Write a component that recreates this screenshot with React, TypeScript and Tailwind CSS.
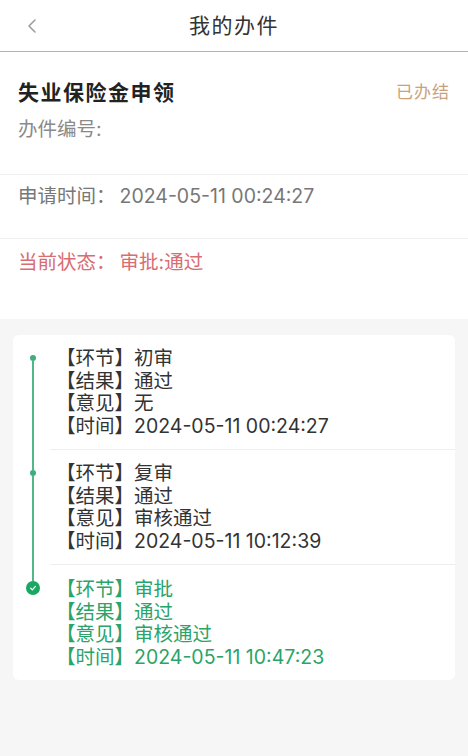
import { ChevronLeft } from 'lucide-react';

type Step = {
  node: string;
  result: string;
  opinion: string;
  time: string;
};

const steps: Step[] = [
  { node: '初审', result: '通过', opinion: '无', time: '2024-05-11 00:24:27' },
  { node: '复审', result: '通过', opinion: '审核通过', time: '2024-05-11 10:12:39' },
  { node: '审批', result: '通过', opinion: '审核通过', time: '2024-05-11 10:47:23' },
];

const font = { fontFamily: 'Inter, "Noto Sans CJK SC", "Noto Sans", sans-serif' };

const TimelineItem = ({ step, index, total }: { step: Step; index: number; total: number }) => {
  const isFirst = index === 0;
  const isLast = index === total - 1;

  return (
    <div className="flex">
      {/* rail: line - dot - line */}
      <div className="w-[37px] shrink-0 pl-[3px] flex flex-col items-center">
        <div className={`w-[2px] ${isLast ? 'h-[16px]' : 'h-[20px]'} ${isFirst ? '' : 'bg-[#52b788]'}`} />
        {isLast ? (
          <div className="w-[14px] h-[14px] rounded-full bg-[#17a862] flex items-center justify-center shrink-0">
            <svg width="8" height="8" viewBox="0 0 10 10" fill="none">
              <path d="M2 5.2 L4.2 7.3 L8 3" stroke="white" strokeWidth="1.6" strokeLinecap="round" strokeLinejoin="round" />
            </svg>
          </div>
        ) : (
          <div className="w-[6px] h-[6px] rounded-full bg-[#3fae7c] shrink-0" />
        )}
        <div className={`w-[2px] flex-1 ${isLast ? '' : 'bg-[#52b788]'}`} />
      </div>
      <div
        className={`flex-1 pl-[6px] pb-[11px] text-[19.5px] leading-[22.75px] ${
          isLast ? 'pt-[13px] text-[#2aa46a]' : 'pt-[12px] text-[#333333] border-b border-[#eeeeee]'
        }`}
      >
        <div>【环节】{step.node}</div>
        <div>【结果】{step.result}</div>
        <div>【意见】{step.opinion}</div>
        <div>【时间】{step.time}</div>
      </div>
    </div>
  );
};

const App = () => {
  return (
    <div className="min-h-screen bg-[#f6f6f6] w-[468px]" style={font}>
      <div className="h-[52px] bg-white border-b border-[#b3b3b3] grid grid-cols-[1fr_auto_1fr] items-center">
        <div className="pl-[20px] flex items-center">
          <ChevronLeft className="text-[#9a9a9a]" size={24} strokeWidth={1.5} />
        </div>
        <h1 className="text-[21px] text-[#333333] tracking-[1.5px]">我的办件</h1>
        <div />
      </div>

      <div className="bg-white">
        <div className="px-[18px] pt-[25px] pb-[30px]">
          <div className="flex items-center justify-between">
            <span className="text-[21px] font-bold text-[#222222] tracking-[1.5px]">失业保险金申领</span>
            <span className="text-[17px] text-[#c9a27c] tracking-[1px]">已办结</span>
          </div>
          <div className="mt-[6px] text-[19.5px] text-[#8a8a8a]">办件编号:</div>
        </div>
        <div className="border-t border-[#eeeeee] px-[18px] h-[64px] pt-[7px] text-[19.5px] text-[#777777] flex items-start gap-[4px]">
          <span>申请时间：</span>
          <span>2024-05-11 00:24:27</span>
        </div>
        <div className="border-t border-[#eeeeee] px-[18px] h-[81px] pt-[9px] text-[19.5px] text-[#d86d72] flex items-start gap-[4px]">
          <span>当前状态：</span>
          <span>审批:通过</span>
        </div>
      </div>

      <div className="mx-[13px] mt-[16px] bg-white rounded-[6px]">
        {steps.map((step, i) => (
          <TimelineItem key={i} step={step} index={i} total={steps.length} />
        ))}
      </div>
    </div>
  );
};

export default App;
